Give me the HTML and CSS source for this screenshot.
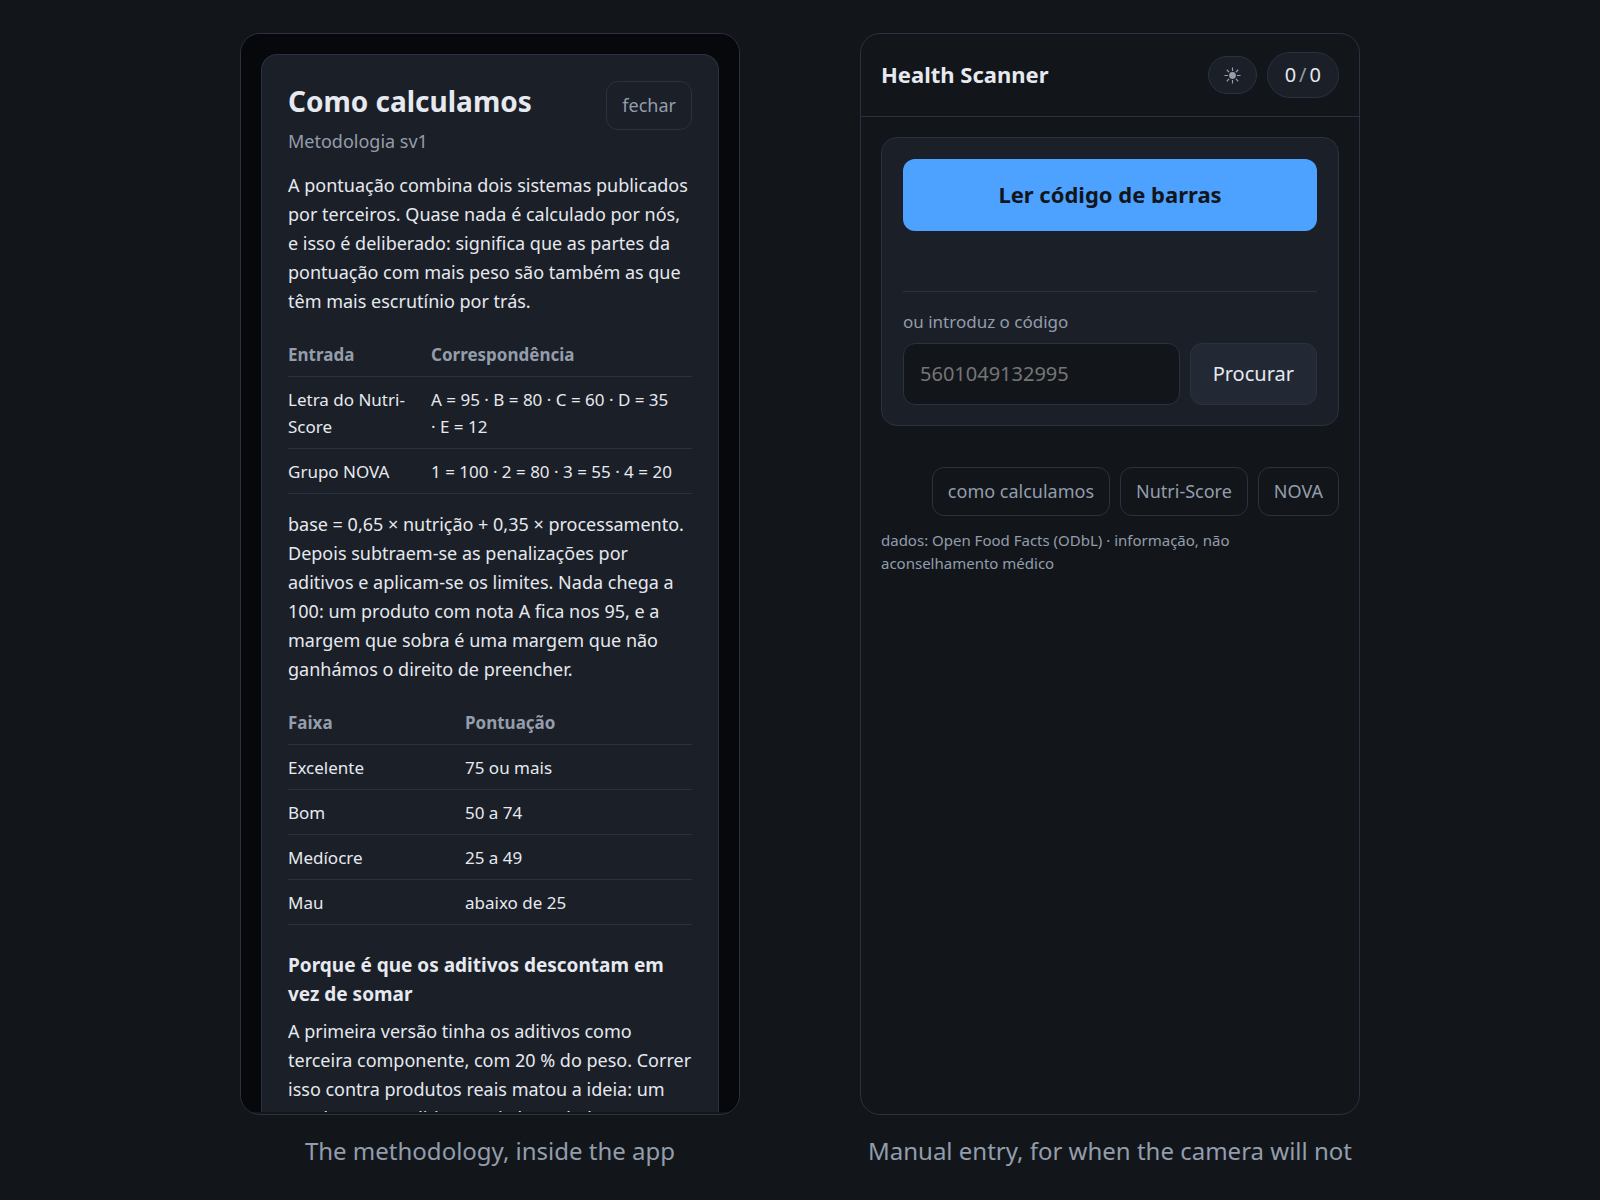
FILE: index.html
```html
<!doctype html>
<html lang="en">
<head>
  <meta charset="utf-8" />
  <meta name="viewport" content="width=device-width,initial-scale=1" />
  <title>Health Scanner</title>
  <link rel="stylesheet" href="styles.css">
</head>
<body>
  <main class="shots">
    <figure class="shot">
      <div class="phone" lang="pt">
        <div class="overlay">
          <section class="sheet">
            <header class="sheet-head">
              <div>
                <h1>Como calculamos</h1>
                <p class="version">Metodologia sv1</p>
              </div>
              <button class="chip" type="button">fechar</button>
            </header>

            <p>A pontuação combina dois sistemas publicados por terceiros. Quase nada é calculado por nós, e isso é deliberado: significa que as partes da pontuação com mais peso são também as que têm mais escrutínio por trás.</p>

            <table class="inputs">
              <thead>
                <tr><th scope="col">Entrada</th><th scope="col">Correspondência</th></tr>
              </thead>
              <tbody>
                <tr><td>Letra do Nutri-Score</td><td>A = 95 · B = 80 · C = 60 · D = 35 · E = 12</td></tr>
                <tr><td>Grupo NOVA</td><td>1 = 100 · 2 = 80 · 3 = 55 · 4 = 20</td></tr>
              </tbody>
            </table>

            <p>base = 0,65 × nutrição + 0,35 × processamento. Depois subtraem-se as penalizações por aditivos e aplicam-se os limites. Nada chega a 100: um produto com nota A fica nos 95, e a margem que sobra é uma margem que não ganhámos o direito de preencher.</p>

            <table class="bands">
              <thead>
                <tr><th scope="col">Faixa</th><th scope="col">Pontuação</th></tr>
              </thead>
              <tbody>
                <tr><td>Excelente</td><td>75 ou mais</td></tr>
                <tr><td>Bom</td><td>50 a 74</td></tr>
                <tr><td>Medíocre</td><td>25 a 49</td></tr>
                <tr><td>Mau</td><td>abaixo de 25</td></tr>
              </tbody>
            </table>

            <h2>Porque é que os aditivos descontam em vez de somar</h2>
            <p>A primeira versão tinha os aditivos como terceira componente, com 20 % do peso. Correr isso contra produtos reais matou a ideia: um produto sem aditivos seria logo dado</p>
          </section>
        </div>
      </div>
      <figcaption>The methodology, inside the app</figcaption>
    </figure>

    <figure class="shot">
      <div class="phone" lang="pt">
        <header class="topbar">
          <h1 class="brand">Health Scanner</h1>
          <button class="pill theme" type="button" aria-label="tema">
            <svg viewBox="0 0 16 16" width="17" height="17" aria-hidden="true">
              <circle cx="8" cy="8" r="3.2" fill="currentColor" />
              <path d="M8 .4v3.4M8 12.2v3.4M.4 8h3.4M12.2 8h3.4M2.6 2.6l2.2 2.2M11.2 11.2l2.2 2.2M13.4 2.6l-2.2 2.2M4.8 11.2l-2.2 2.2" stroke="currentColor" stroke-width="1.1" />
            </svg>
          </button>
          <button class="pill count" type="button"><span>0</span><span class="slash">/</span><span>0</span></button>
        </header>

        <div class="content">
          <section class="card">
            <button class="scan" type="button">Ler código de barras</button>
            <div class="status"></div>
            <form class="manual">
              <label for="code">ou introduz o código</label>
              <div class="row">
                <input id="code" type="text" inputmode="numeric" placeholder="5601049132995">
                <button class="search" type="button">Procurar</button>
              </div>
            </form>
          </section>

          <footer>
            <nav class="links">
              <button class="chip" type="button">como calculamos</button>
              <a class="chip" href="#nutri-score">Nutri-Score</a>
              <a class="chip" href="#nova">NOVA</a>
            </nav>
            <p class="credits">dados: Open Food Facts (ODbL) · informação, não aconselhamento médico</p>
          </footer>
        </div>
      </div>
      <figcaption>Manual entry, for when the camera will not</figcaption>
    </figure>
  </main>
</body>
</html>
```
FILE: styles.css
```css
:root{
  --bg:#12161b; --card:#1b1f27; --raised:#222834; --line:#2a3140;
  --text:#e6e9ef; --muted:#939dab; --accent:#4da1ff; --dim:#06080c;
}
*{ box-sizing:border-box; }
body{ margin:0; background:var(--bg); color:var(--text);
  font:18px/29px "Noto Sans",sans-serif; }
h1,h2,p,figure{ margin:0; }
button,input{ font:inherit; color:inherit; }

.shots{ display:flex; justify-content:center; gap:120px; padding:33px 24px 24px; }
.shot{ flex:0 1 500px; min-width:0; }
.phone{
  aspect-ratio:250/541; overflow:hidden; padding-bottom:2px;
  border:1px solid var(--line); border-radius:20px;
}
figcaption{ margin-top:19px; text-align:center; font-size:24px; line-height:33px; color:var(--muted); }

/* methodology sheet */
.overlay{ height:100%; padding:20px 20px 0; background:var(--dim); }
.sheet{
  height:100%; overflow:hidden; padding:26px 26px 0;
  background:var(--card); border:1px solid var(--line); border-bottom:0;
  border-radius:16px 16px 0 0;
}
.sheet-head{ display:flex; justify-content:space-between; align-items:flex-start; margin-bottom:16px; }
.sheet h1{ font-size:28px; line-height:40px; }
.version{ margin-top:6px; line-height:28px; color:var(--muted); }
.chip{
  display:inline-block; padding:10px 15px; line-height:27px;
  border:1px solid var(--line); border-radius:12px;
  background:none; color:var(--muted); text-decoration:none;
}
table{ width:100%; margin:16px 0; border-collapse:collapse; font-size:17px; line-height:27px; }
th,td{ padding:9px 16px 8px 0; text-align:left; vertical-align:top; border-bottom:1px solid var(--line); }
th{ color:var(--muted); font-weight:700; }
.inputs th:first-child{ width:143px; }
.bands th:first-child{ width:177px; }
.sheet h2{ margin:26px 0 8px; font-size:19px; line-height:29px; }

/* scanner */
.topbar{ display:flex; align-items:center; gap:10px; padding:18px 20px; border-bottom:1px solid var(--line); }
.brand{ flex:1; padding-bottom:2px; font-size:22px; line-height:30px; font-weight:700; }
.pill{ display:flex; align-items:center; border:1px solid var(--line); border-radius:999px; background:var(--card); }
.theme{ height:38px; padding:0 15px; color:var(--muted); }
.count{ height:46px; padding:0 17px 2px; gap:3px; font-size:20px; }
.slash{ color:var(--muted); }
.content{ padding:20px; }
.card{ padding:21px 21px 20px; background:var(--card); border:1px solid var(--line); border-radius:16px; }
.scan{
  display:block; width:100%; padding:19px 20px 21px; border:0; border-radius:12px;
  background:var(--accent); color:var(--bg); font-size:22px; line-height:32px; font-weight:700;
}
.status{ min-height:60px; }
.manual{ padding-top:17px; border-top:1px solid var(--line); }
.manual label{ display:block; margin-bottom:8px; font-size:17px; line-height:26px; color:var(--muted); }
.row{ display:flex; gap:10px; }
.row input{
  flex:1; min-width:0; padding:15px 16px; line-height:30px; font-size:20px;
  border:1px solid var(--line); border-radius:12px; background:var(--bg);
}
.row input::placeholder{ color:#757575; opacity:1; }
.search{ padding:15px 22px; font-size:20px; line-height:30px; border:1px solid var(--line); border-radius:12px; background:var(--raised); }
.links{ display:flex; flex-wrap:wrap; justify-content:flex-end; gap:10px; margin-top:41px; }
.credits{ margin-top:13px; font-size:15px; line-height:23px; color:var(--muted); }
```
